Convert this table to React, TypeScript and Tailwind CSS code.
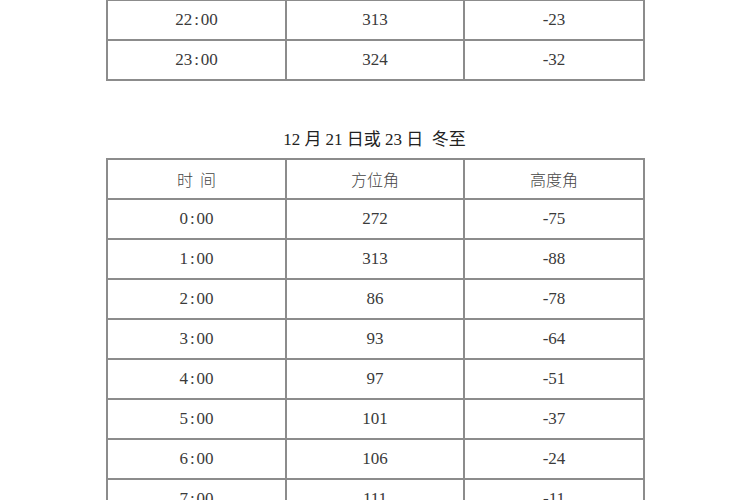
type Row = [string, string, string]

const topRows: Row[] = [
  ['22:00', '313', '-23'],
  ['23:00', '324', '-32'],
]

const winterRows: Row[] = [
  ['0:00', '272', '-75'],
  ['1:00', '313', '-88'],
  ['2:00', '86', '-78'],
  ['3:00', '93', '-64'],
  ['4:00', '97', '-51'],
  ['5:00', '101', '-37'],
  ['6:00', '106', '-24'],
  ['7:00', '111', '-11'],
]

// 时刻里的冒号在原图中两侧留白较宽
function Time({ value }: { value: string }) {
  const [h, m] = value.split(':')
  return (
    <>
      {h}
      <span className="mx-[2px]">:</span>
      {m}
    </>
  )
}

function SunTable({ rows, header }: { rows: Row[]; header?: Row }) {
  return (
    <table className="w-[537px] table-fixed border-collapse">
      <colgroup>
        <col className="w-[179px]" />
        <col className="w-[178px]" />
        <col className="w-[180px]" />
      </colgroup>
      <tbody>
        {header && (
          <tr>
            {header.map((h, i) => (
              <td
                key={i}
                className="h-[40px] whitespace-pre border-2 border-[#8c8c8c] p-0 text-center align-middle font-['Noto_Sans_CJK_SC',sans-serif] text-[16px] font-light text-[#444]"
              >
                {h}
              </td>
            ))}
          </tr>
        )}
        {rows.map((r, ri) => (
          <tr key={ri}>
            {r.map((c, ci) => (
              <td
                key={ci}
                className="h-[40px] border-2 border-[#8c8c8c] p-0 text-center align-middle text-[17px] text-[#3a3a3a]"
              >
                {ci === 0 ? <Time value={c} /> : c}
              </td>
            ))}
          </tr>
        ))}
      </tbody>
    </table>
  )
}

export default function App() {
  return (
    <div className="h-[500px] w-[750px] overflow-hidden bg-white font-['Liberation_Serif','Noto_Sans_CJK_SC',serif]">
      <div className="-mt-px ml-[106px]">
        <SunTable rows={topRows} />
        <p className="mt-[47px] w-[537px] whitespace-pre text-center text-[17px] leading-6 text-[#222]">
          12 月 21 日或 23 日  冬至
        </p>
        <div className="mt-[6px]">
          <SunTable header={['时  间', '方位角', '高度角']} rows={winterRows} />
        </div>
      </div>
    </div>
  )
}
